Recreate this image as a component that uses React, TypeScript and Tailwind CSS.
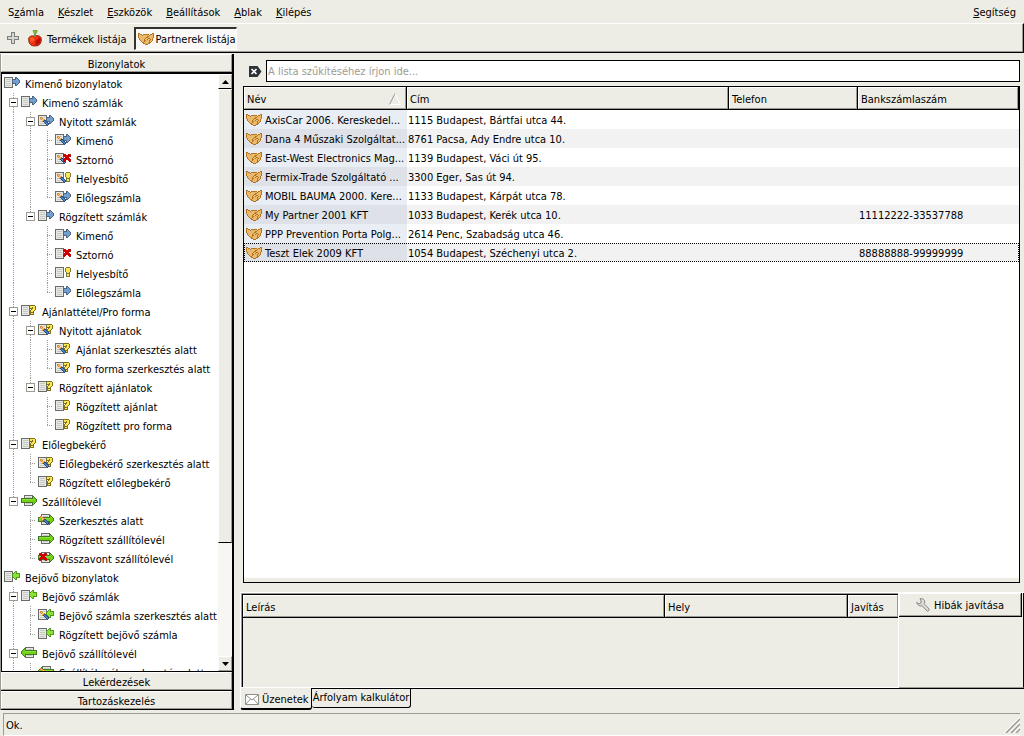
import { useState } from 'react';
import type { ReactNode } from 'react';
import clsx from 'clsx';

type IconName =
  | 'out'
  | 'outEdit'
  | 'storno'
  | 'stornoEdit'
  | 'fix'
  | 'fixEdit'
  | 'quote'
  | 'quoteEdit'
  | 'ship'
  | 'shipEdit'
  | 'shipCancel'
  | 'in'
  | 'inEdit'
  | 'shipIn'
  | 'shipInEdit';

type TreeNode = {
  label: string;
  icon: IconName;
  children?: TreeNode[];
  // the list goes on below this node
  more?: boolean;
};

const tree: TreeNode[] = [
  {
    label: 'Kimenő bizonylatok',
    icon: 'out',
    children: [
      {
        label: 'Kimenő számlák',
        icon: 'out',
        children: [
          {
            label: 'Nyitott számlák',
            icon: 'outEdit',
            children: [
              { label: 'Kimenő', icon: 'outEdit' },
              { label: 'Sztornó', icon: 'stornoEdit' },
              { label: 'Helyesbítő', icon: 'fixEdit' },
              { label: 'Előlegszámla', icon: 'outEdit' },
            ],
          },
          {
            label: 'Rögzített számlák',
            icon: 'out',
            children: [
              { label: 'Kimenő', icon: 'out' },
              { label: 'Sztornó', icon: 'storno' },
              { label: 'Helyesbítő', icon: 'fix' },
              { label: 'Előlegszámla', icon: 'out' },
            ],
          },
        ],
      },
      {
        label: 'Ajánlattétel/Pro forma',
        icon: 'quote',
        children: [
          {
            label: 'Nyitott ajánlatok',
            icon: 'quoteEdit',
            children: [
              { label: 'Ajánlat szerkesztés alatt', icon: 'quoteEdit' },
              { label: 'Pro forma szerkesztés alatt', icon: 'quoteEdit' },
            ],
          },
          {
            label: 'Rögzített ajánlatok',
            icon: 'quote',
            children: [
              { label: 'Rögzített ajánlat', icon: 'quote' },
              { label: 'Rögzített pro forma', icon: 'quote' },
            ],
          },
        ],
      },
      {
        label: 'Előlegbekérő',
        icon: 'quote',
        children: [
          { label: 'Előlegbekérő szerkesztés alatt', icon: 'quoteEdit' },
          { label: 'Rögzített előlegbekérő', icon: 'quote' },
        ],
      },
      {
        label: 'Szállítólevél',
        icon: 'ship',
        children: [
          { label: 'Szerkesztés alatt', icon: 'shipEdit' },
          { label: 'Rögzített szállítólevél', icon: 'ship' },
          { label: 'Visszavont szállítólevél', icon: 'shipCancel' },
        ],
      },
    ],
  },
  {
    label: 'Bejövő bizonylatok',
    icon: 'in',
    children: [
      {
        label: 'Bejövő számlák',
        icon: 'in',
        children: [
          { label: 'Bejövő számla szerkesztés alatt', icon: 'inEdit' },
          { label: 'Rögzített bejövő számla', icon: 'in' },
        ],
      },
      {
        label: 'Bejövő szállítólevél',
        icon: 'shipIn',
        more: true,
        children: [{ label: 'Szállítólevél szerkesztés alatt', icon: 'shipInEdit', more: true }],
      },
    ],
  },
];

const menuItems = [
  ['S', 'z', 'ámla'],
  ['', 'K', 'észlet'],
  ['', 'E', 'szközök'],
  ['', 'B', 'eállítások'],
  ['', 'A', 'blak'],
  ['', 'K', 'ilépés'],
];

const partners = [
  { name: 'AxisCar 2006. Kereskedel...', address: '1115 Budapest, Bártfai utca 44.', account: '' },
  { name: 'Dana 4 Műszaki Szolgáltat...', address: '8761 Pacsa, Ady Endre utca 10.', account: '' },
  { name: 'East-West Electronics Mag...', address: '1139 Budapest, Váci út 95.', account: '' },
  { name: 'Fermix-Trade Szolgáltató ...', address: '3300 Eger, Sas út 94.', account: '' },
  { name: 'MOBIL BAUMA 2000. Kere...', address: '1133 Budapest, Kárpát utca 78.', account: '' },
  { name: 'My Partner 2001 KFT', address: '1033 Budapest, Kerék utca 10.', account: '11112222-33537788' },
  { name: 'PPP Prevention Porta Polg...', address: '2614 Penc, Szabadság utca 46.', account: '' },
  { name: 'Teszt Elek 2009 KFT', address: '1054 Budapest, Széchenyi utca 2.', account: '88888888-99999999' },
];

const bevel = 'border border-t-white border-l-white border-r-[#9c9b93] border-b-[#9c9b93] bg-[#eeede5]';

// small pixel icons: one character is one pixel, '.' is transparent
const arrowOutMap = [
  '...dd...',
  '...dad..',
  'ddddaad.',
  'daaaaaad',
  'daaaaaad',
  'daaaaaad',
  'ddddaad.',
  '...dad..',
  '...dd...',
];
const arrowInMap = [
  '...dd...',
  '..dad...',
  '.daadddd',
  'daaaaaad',
  'daaaaaad',
  'daaaaaad',
  '.daadddd',
  '..dad...',
  '...dd...',
];
const crossMap = [
  'drr..rrd',
  'rrrrrrrr',
  'drrrrrrd',
  '..rrrr..',
  '.rrrrrr.',
  'rrrrrrrr',
  'rrr..rrr',
  'dr....rd',
];
const bulbMap = [
  '.oooo.',
  'oyyyyo',
  'oyyyyo',
  'oyyyyo',
  'oyyyyo',
  '.oyyo.',
  '.oooo.',
  '.oyyo.',
  '.oyyo.',
  '.oooo.',
];
const questionMap = [
  '.ooooo.',
  'oyyyyyo',
  'oyyoyyo',
  'ooooyyo',
  '..oyyyo',
  '.oyyyo.',
  '.oyyo..',
  '.oooo..',
  '.oyyo..',
  '.oooo..',
];
const penMap = [
  'oo.......',
  'oyo......',
  '.oyyo....',
  '..yobb...',
  '..obllb..',
  '....bllb.',
  '.....bllb',
  '......blb',
  '.......b.',
];
const shipMap = [
  '...........dd...',
  '...........dgd..',
  'ddddddddddddggd.',
  'dlllllllllllgggd',
  'dggggggggggggggd',
  'dggggggggggggggd',
  'ddddddddddddggd.',
  '...........dgd..',
  '...........dd...',
];
const shipInMap = shipMap.map((row) => row.split('').reverse().join(''));
const handshakeMap = [
  'dd............dd',
  'dodd.dddddd.ddod',
  'dooodoooooodoood',
  'dooooooooddooood',
  'doooooooddoooood',
  '.dooooodooddood.',
  '.doooodoodoodod.',
  '..doooddooodood.',
  '...doodoooodod..',
  '....ddooooodd...',
  '.....ddooodd....',
  '.......ddd......',
];

function Pixels({ map, colors, x = 0, y = 0 }: { map: string[]; colors: Record<string, string>; x?: number; y?: number }) {
  return (
    <>
      {Object.keys(colors).map((c) => (
        <path
          key={c}
          fill={colors[c]}
          d={map
            .map((row, r) => row.split('').map((p, i) => (p === c ? `M${x + i} ${y + r}h1v1h-1z` : '')).join(''))
            .join('')}
        />
      ))}
    </>
  );
}

const Doc = ({ x = 0 }: { x?: number }) => (
  <>
    <path d={`M${x + 0.5} 0.5h8v10h-8z`} fill="#e8e8e4" stroke="#6a6c67" />
    <path d={`M${x + 2} 2.5h5M${x + 2} 4.5h5M${x + 2} 6.5h5M${x + 2} 8.5h5`} stroke="#c6c8c2" />
  </>
);
const Pen = () => <Pixels map={penMap} x={2} y={2} colors={{ o: '#e08a2c', y: '#fcc06a', b: '#204a87', l: '#4a80c0' }} />;
const ArrowOut = () => <Pixels map={arrowOutMap} x={8} y={0} colors={{ d: '#4a6584', a: '#729fcf' }} />;
const ArrowIn = () => <Pixels map={arrowInMap} x={8} y={0} colors={{ d: '#4f9a1e', a: '#8ae234' }} />;
const Cross = ({ x = 8 }: { x?: number }) => <Pixels map={crossMap} x={x} y={1} colors={{ r: '#cc0000', d: '#8a3030' }} />;
const Bulb = () => <Pixels map={bulbMap} x={10} y={0} colors={{ o: '#7f7740', y: '#fce94f' }} />;
const Question = () => <Pixels map={questionMap} x={8} y={0} colors={{ o: '#7f6f20', y: '#fce94f' }} />;
const ShipOut = () => (
  <>
    <Doc x={3} />
    <Pixels map={shipMap} y={1} colors={{ d: '#44762a', g: '#73d216', l: '#8ae234' }} />
  </>
);
const ShipIn = () => (
  <>
    <Doc x={4} />
    <Pixels map={shipInMap} y={1} colors={{ d: '#44762a', g: '#73d216', l: '#8ae234' }} />
  </>
);

const icons: Record<IconName, ReactNode> = {
  out: <><Doc /><ArrowOut /></>,
  outEdit: <><Doc /><ArrowOut /><Pen /></>,
  storno: <><Doc /><Cross /></>,
  stornoEdit: <><Doc /><Pen /><Cross /></>,
  fix: <><Doc /><Bulb /></>,
  fixEdit: <><Doc /><Pen /><Bulb /></>,
  quote: <><Doc /><Question /></>,
  quoteEdit: <><Doc /><Question /><Pen /></>,
  ship: <ShipOut />,
  shipEdit: <><ShipOut /><Pen /></>,
  shipCancel: <><ShipOut /><Cross x={1} /></>,
  in: <><Doc /><ArrowIn /></>,
  inEdit: <><Doc /><ArrowIn /><Pen /></>,
  shipIn: <ShipIn />,
  shipInEdit: <><ShipIn /><Pen /></>,
};

function NodeIcon({ name }: { name: IconName }) {
  return (
    <svg viewBox="0 0 16 13" className="h-[13px] w-4 shrink-0" fill="none" shapeRendering="crispEdges" aria-hidden="true">
      {icons[name]}
    </svg>
  );
}

function HandshakeIcon() {
  return (
    <svg viewBox="0 0 16 12" className="h-3 w-4 shrink-0" shapeRendering="crispEdges" aria-hidden="true">
      <Pixels map={handshakeMap} colors={{ d: '#b5741d', o: '#e9b96e' }} />
    </svg>
  );
}

function AppleIcon() {
  return (
    <svg viewBox="0 0 14 17" className="h-[17px] w-3.5 shrink-0" fill="none" aria-hidden="true">
      <path d="M0.7 8q1.300-3 5.300-2 5-1.500 7 1.500 1 3-0.500 6-2 3-5.500 2.500-4 0.500-5.500-2.500-1.200-3-0.800-5.500z" fill="#ef2f10" stroke="#8a2a12" strokeWidth="0.9" />
      <path d="M7.500 11l4.700-4q1.300 3.500-0.500 6-1.500 2.200-4.200 2z" fill="#b80d05" />
      <path d="M2 8q1-1.500 3-1l2 3-4 2.500q-1.500-2-1-4.500z" fill="#ff5a26" />
      <path d="M6.500 7V4L5 0.500h4V2L7.500 4v3z" fill="#73d216" stroke="#6a8a4a" strokeWidth="0.8" />
    </svg>
  );
}

function PlusIcon() {
  return (
    <svg viewBox="0 0 12 12" className="size-3" fill="none" shapeRendering="crispEdges" aria-hidden="true">
      <path d="M4.500 0.500h3v4h4v3h-4v4h-3v-4h-4v-3h4z" fill="#d3d7cf" stroke="#7d7f7a" />
    </svg>
  );
}

function Guide({ kind, children }: { kind: 'line' | 'tee' | 'end' | 'none'; children?: ReactNode }) {
  return (
    <span className="relative h-[19px] w-[17px] shrink-0">
      <svg viewBox="0 0 17 19" className="h-[19px] w-[17px]" stroke="#9c9b93" strokeDasharray="1 1" shapeRendering="crispEdges" aria-hidden="true">
        {kind !== 'none' && <path d={kind === 'end' ? 'M9.5 0v10' : 'M9.5 0v19'} />}
        {(kind === 'tee' || kind === 'end') && <path d="M9 9.500h6" />}
      </svg>
      {children}
    </span>
  );
}

function TreeItem({ node, path, last, trail }: { node: TreeNode; path: string; last: boolean; trail: boolean[] }) {
  const [open, setOpen] = useState(true);
  const isRoot = path.indexOf('/') < 0;
  const hasChildren = !!node.children;

  return (
    <li role="treeitem" aria-expanded={hasChildren ? open : undefined} aria-selected={false}>
      <div className="flex h-[19px] items-center whitespace-nowrap">
        {trail.map((line, i) => (
          <Guide key={i} kind={line ? 'line' : 'none'} />
        ))}
        {!isRoot && (
          <Guide kind={last ? 'end' : 'tee'}>
            {hasChildren && (
              <button
                type="button"
                aria-label={node.label}
                onClick={() => setOpen((prev) => !prev)}
                className="absolute top-[5px] left-[5px] flex size-[9px] items-center justify-center border border-[#9c9b93] bg-white"
              >
                <span className="h-px w-[5px] bg-black" />
              </button>
            )}
          </Guide>
        )}
        <NodeIcon name={node.icon} />
        <span className="pt-0.5 pl-[5px]">{node.label}</span>
      </div>
      {open && node.children && (
        <ul role="group">
          {node.children.map((child, i) => (
            <TreeItem
              key={i}
              node={child}
              path={`${path}/${i}`}
              last={i === node.children!.length - 1 && !child.more}
              trail={isRoot ? [] : [...trail, !last]}
            />
          ))}
        </ul>
      )}
    </li>
  );
}

function ScrollBar() {
  return (
    <div className="flex w-[14px] shrink-0 flex-col bg-[#f7f6f2]">
      <button type="button" aria-label="Fel" className={clsx(bevel, 'flex h-[15px] items-center justify-center border-b-black')}>
        <svg viewBox="0 0 7 4" className="h-1 w-[7px]" aria-hidden="true"><path d="M3.500 0L7 4H0z" /></svg>
      </button>
      <div className="flex-1">
        <div className={clsx(bevel, 'h-4/5 border-b-black')} />
      </div>
      <button type="button" aria-label="Le" className={clsx(bevel, 'flex h-[15px] items-center justify-center')}>
        <svg viewBox="0 0 7 4" className="h-1 w-[7px]" aria-hidden="true"><path d="M3.500 4L7 0H0z" /></svg>
      </button>
    </div>
  );
}

function SectionButton({ children }: { children: ReactNode }) {
  return (
    <button type="button" className={clsx(bevel, 'flex h-[18px] shrink-0 items-center justify-center')}>
      <span className="pt-0.5">{children}</span>
    </button>
  );
}

function Sidebar() {
  return (
    <aside className="flex w-[234px] shrink-0 flex-col border-r-2 border-l border-r-black border-l-[#9c9b93]">
      <SectionButton>Bizonylatok</SectionButton>
      <div className="flex min-h-0 flex-1 border-t-2 border-b border-l border-black bg-white">
        <ul role="tree" aria-label="Bizonylatok" className="min-w-0 flex-1 overflow-hidden pl-0.5">
          {tree.map((node, i) => (
            <TreeItem key={i} node={node} path={`${i}`} last={i === tree.length - 1} trail={[]} />
          ))}
        </ul>
        <ScrollBar />
      </div>
      <SectionButton>Lekérdezések</SectionButton>
      <div className="h-px bg-black" />
      <SectionButton>Tartozáskezelés</SectionButton>
      <div className="h-px bg-black" />
    </aside>
  );
}

function HeadCell({ children, end }: { children: ReactNode; end?: boolean }) {
  return (
    <th scope="col" className={clsx('h-[23px] border-b border-black p-0 text-left font-normal', !end && 'border-r')}>
      <div className={clsx(bevel, 'flex h-[22px] items-center justify-between pt-0.5 pl-0.5')}>{children}</div>
    </th>
  );
}

function PartnerTable() {
  return (
    <div className="mr-1 min-h-0 flex-1 border border-black pb-1">
      <div className="h-full bg-white">
        <table className="w-full table-fixed border-separate border-spacing-0">
          <colgroup>
            <col className="w-[163px]" />
            <col className="w-[322px]" />
            <col className="w-[129px]" />
            <col />
          </colgroup>
          <thead>
            <tr>
              <HeadCell>
                Név
                <svg viewBox="0 0 12 12" className="mr-1 size-3" fill="none" aria-hidden="true">
                  <path d="M11 11.500H0.500" stroke="#fff" />
                  <path d="M6 0.500l5.500 11" stroke="#fff" />
                  <path d="M0.500 11.500l5.500-11" stroke="#9c9b93" />
                </svg>
              </HeadCell>
              <HeadCell>Cím</HeadCell>
              <HeadCell>Telefon</HeadCell>
              <HeadCell>Bankszámlaszám</HeadCell>
            </tr>
          </thead>
          <tbody className="leading-[17px] whitespace-nowrap">
            {partners.map((p, i) => (
              <tr
                key={p.name}
                className={clsx(
                  i % 2 ? 'bg-[#f2f2f2]' : 'bg-white',
                  i === partners.length - 1 && 'outline-1 -outline-offset-1 outline-black outline-dotted',
                )}
              >
                <td className={clsx('h-[19px] overflow-hidden p-0', i % 2 ? 'bg-[#dee1e7]' : 'bg-[#e9edf4]')}>
                  <div className="flex items-center gap-[3px] pl-0.5">
                    <HandshakeIcon />
                    <span className="pt-0.5">{p.name}</span>
                  </div>
                </td>
                <td className="p-0 pt-0.5 pl-px">{p.address}</td>
                <td className="p-0" />
                <td className="p-0 pt-0.5 pl-px">{p.account}</td>
              </tr>
            ))}
          </tbody>
        </table>
      </div>
    </div>
  );
}

function MessagePanel() {
  return (
    <section>
      <div className="flex h-24 border-t border-l border-white">
        <div className="flex min-w-0 flex-1 border-r border-b border-white">
          <div className="min-w-0 flex-1 border-t border-l border-[#9c9b93]">
            <div className="h-full border-t border-l border-black">
              <table className="w-full table-fixed border-separate border-spacing-0">
                <colgroup>
                  <col />
                  <col className="w-[183px]" />
                  <col className="w-[50px]" />
                </colgroup>
                <thead>
                  <tr>
                    <HeadCell>Leírás</HeadCell>
                    <HeadCell>Hely</HeadCell>
                    <HeadCell end>Javítás</HeadCell>
                  </tr>
                </thead>
              </table>
            </div>
          </div>
        </div>
        <div className="w-[125px] shrink-0 border-r border-b border-r-black border-b-[#9c9b93] pr-px">
          <button type="button" className="w-full border-r border-b border-black">
            <span className={clsx(bevel, 'flex h-[23px] items-center justify-center gap-1')}>
              <svg viewBox="0 0 14 14" className="size-3.5" fill="none" aria-hidden="true">
                <path d="M4 0.700q4.500-0.500 4.800 3.300l-0.600 1.800 5 5.200q0.300 2-2 2.200l-5-5.400q-4.500 0.800-5.600-3.500l2.200 1.500 1.900-0.600 0.400-2.200z" fill="#dddcd6" stroke="#8c8b84" />
              </svg>
              <span className="pt-0.5">Hibák javítása</span>
            </span>
          </button>
        </div>
      </div>
      <div className="flex items-start" role="tablist">
        <button
          type="button"
          role="tab"
          aria-selected="true"
          className="flex h-[22px] w-[72px] items-center gap-[3px] rounded-b-[3px] border-r border-b-2 border-l border-black border-l-white pt-0.5 pl-1 whitespace-nowrap"
        >
          <svg viewBox="0 0 14 11" className="h-[11px] w-3.5 shrink-0" fill="none" stroke="#8f8f8a" aria-hidden="true">
            <path d="M0.500 0.500h13v10h-13z" fill="#fff" />
            <path d="M1 1l6 5 6-5M1 10l4.500-5M13 10l-4.500-5" />
          </svg>
          Üzenetek
        </button>
        <div className="flex flex-1 border-t border-black">
          <button
            type="button"
            role="tab"
            aria-selected="false"
            className="flex h-[19px] w-[99px] items-center justify-center rounded-b-[3px] border-r border-b border-black pb-0.5 whitespace-nowrap"
          >
            Árfolyam kalkulátor
          </button>
        </div>
      </div>
    </section>
  );
}

export default function App() {
  const [filter, setFilter] = useState('');

  return (
    <div className="flex h-screen flex-col overflow-hidden bg-[#eeede5] font-['DejaVu_Sans_Condensed','DejaVu_Sans',sans-serif] text-[11px] leading-[19px] text-black">
      <nav className="flex h-[23px] shrink-0 items-center gap-3.5 px-2 pt-0.5">
        {menuItems.map(([before, key, after]) => (
          <a href="#" key={key + after}>
            {before}
            <span className="underline">{key}</span>
            {after}
          </a>
        ))}
        <a href="#" className="ml-auto"><span className="underline">S</span>egítség</a>
      </nav>

      <div className="flex h-[30px] shrink-0 items-center border-t border-r border-b border-t-white border-r-black border-b-black pl-[7px] shadow-[inset_-1px_-1px_0_#9c9b93]">
        <button type="button" aria-label="Új"><PlusIcon /></button>
        <button type="button" className="ml-[9px] flex items-center gap-[5px] whitespace-nowrap">
          <AppleIcon />
          <span className="pt-0.5">Termékek listája</span>
        </button>
        <button
          type="button"
          className="ml-[7px] flex h-[23px] items-center gap-0.5 border-t-2 border-r border-b border-l-2 border-t-[#33322e] border-r-white border-b-white border-l-[#33322e] bg-[#f9f8f6] pl-0.5 whitespace-nowrap"
        >
          <HandshakeIcon />
          <span className="pt-0.5">Partnerek listája</span>
        </button>
      </div>

      <div className="flex min-h-0 flex-1 pt-px">
        <Sidebar />
        <main className="flex min-w-0 flex-1 flex-col pl-[6px]">
          <div className="flex min-h-0 flex-1 flex-col pt-1.5 pl-[3px]">
            <div className="mr-1 mb-1 flex items-center gap-1 pl-[5px]">
              <button type="button" aria-label="Szűrő törlése" onClick={() => setFilter('')}>
                <svg viewBox="0 0 14 11" className="h-[11px] w-3.5" fill="none" aria-hidden="true">
                  <path d="M1 0h8.500l4 5.500-4 5.500H1z" fill="#2e3436" />
                  <path d="M3.500 3l5 5M8.500 3l-5 5" stroke="#fff" strokeWidth="1.600" />
                </svg>
              </button>
              <input
                type="text"
                aria-label="A lista szűkítése"
                placeholder="A lista szűkítéséhez írjon ide..."
                value={filter}
                onChange={(e) => setFilter(e.target.value)}
                className="h-[22px] min-w-0 flex-1 border border-black bg-white px-px outline-none placeholder:text-[#9c9b93]"
              />
            </div>
            <PartnerTable />
          </div>
          <div className="h-[9px] shrink-0" />
          <MessagePanel />
        </main>
      </div>

      <footer className="flex h-[26px] shrink-0 flex-col pt-[3px] pb-0.5 pl-[3px]">
        <div className="mr-1 flex flex-1 items-center justify-between border-t border-b border-l border-t-[#9c9b93] border-b-white border-l-[#9c9b93] pl-0.5">
          <span className="pt-0.5">Ok.</span>
          <svg viewBox="0 0 16 16" className="size-4" fill="none" aria-hidden="true">
            <path d="M0 16L16 0M5 16L16 5M10 16l6-6" stroke="#fff" />
            <path d="M2 16L16 2M7 16l9-9M12 16l4-4" stroke="#9c9b93" strokeWidth="1.500" />
          </svg>
        </div>
      </footer>
    </div>
  );
}
